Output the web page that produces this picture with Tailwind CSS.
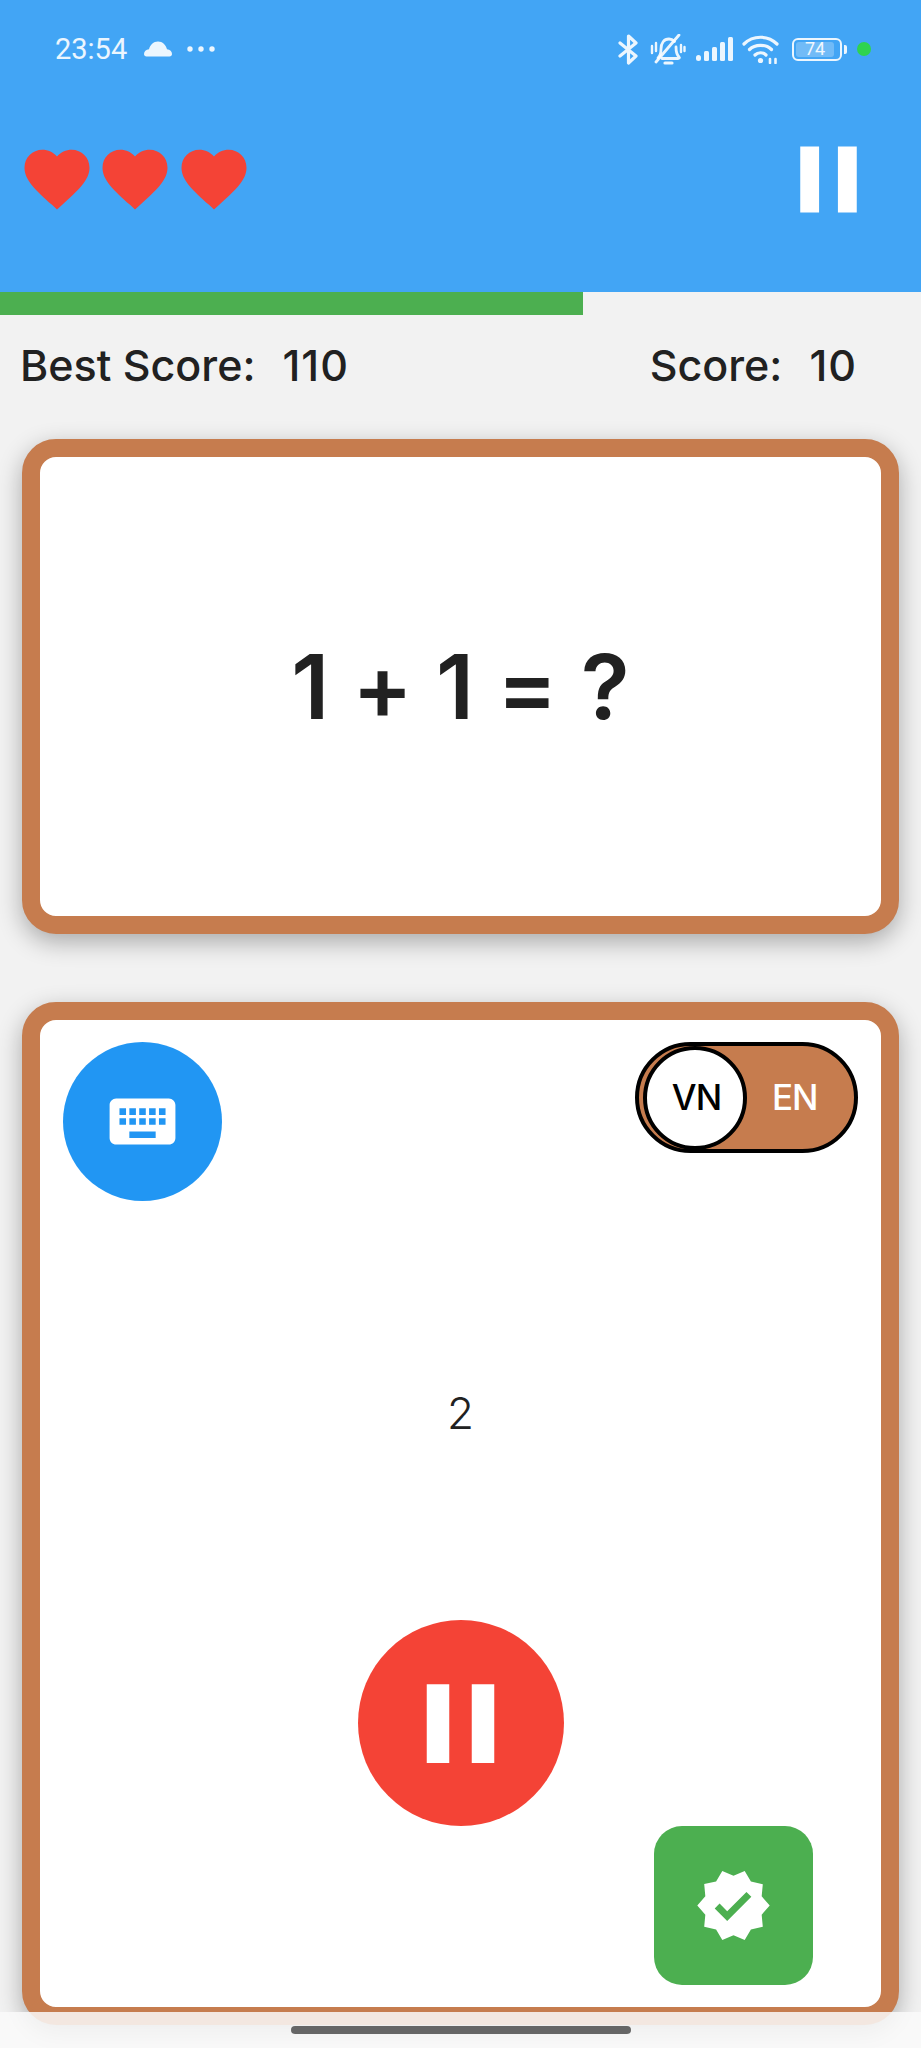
<!DOCTYPE html>
<html>
<head>
<meta charset="utf-8">
<script src="https://cdn.jsdelivr.net/npm/@tailwindcss/browser@4"></script>
</head>
<body class="m-0">
<div class="relative w-[921px] h-[2048px] overflow-hidden bg-[#f2f2f2] font-['Inter',sans-serif] text-[#212121]">
  <header class="h-[292px] bg-[#42a5f5] flex flex-col">
    <div class="h-[98px] flex items-center justify-between pl-[55px] pr-[50px] text-white/90">
      <div class="flex items-center">
        <span class="font-['Roboto',sans-serif] text-[29px] leading-none">23:54</span>
        <svg class="ml-[16px] w-[30px] h-[18px]" viewBox="0 0 30 18" fill="currentColor"><path d="M1 14c0-2.500 2-4.500 5-4.800C7 5 10.500 1.500 15 1.500s8 3.500 9 7.700c3 .3 5 2.300 5 4.800 0 1.500-1 2.500-2.500 2.500h-23C2 16.500 1 15.500 1 14z"/></svg>
        <svg class="ml-[14px] w-[28px] h-[6px]" viewBox="0 0 28 6" fill="currentColor"><circle cx="3" cy="3" r="2.700"/><circle cx="14" cy="3" r="2.700"/><circle cx="25" cy="3" r="2.700"/></svg>
      </div>
      <div class="flex items-center">
        <svg class="w-[21px] h-[31px]" viewBox="0 0 21 31" fill="none" stroke="currentColor" stroke-width="3.200" stroke-linejoin="round" stroke-linecap="round"><path d="M2 9l16 13-7.500 7V2L18 9 2 22"/></svg>
        <svg class="ml-[11px] w-[36px] h-[31px]" viewBox="0 0 36 31" fill="none" stroke="currentColor" stroke-width="2.800" stroke-linecap="round"><path d="M8 24c2-2 3-5 3-9 0-6 3-10 8-10 2 0 4 1 5.500 2.500M26 13c0 6 1 8 3 10 1 1 0 1.500-1 1.500H12"/><path d="M15 29h7" stroke-width="3.200"/><path d="M6 28L29 1"/><path d="M2 12v7M6 9v8M31 11v7M34.500 13v4" stroke-width="2.400"/></svg>
        <svg class="ml-[10px] w-[37px] h-[24px]" viewBox="0 0 37 24" fill="currentColor"><rect x="0" y="18" width="5" height="6" rx="2.500"/><rect x="8" y="14" width="5" height="10" rx="1.500"/><rect x="16" y="10" width="5" height="14" rx="1.500"/><rect x="24" y="5" width="5" height="19" rx="1.500"/><rect x="32" y="0" width="5" height="24" rx="1.500"/></svg>
        <svg class="ml-[9px] w-[37px] h-[29px]" viewBox="0 0 37 29" fill="none" stroke="currentColor" stroke-width="3.200" stroke-linecap="round"><path d="M2 9C11 0 26 0 35 9"/><path d="M7.500 14.500C13 9 24 9 29.500 14.500"/><path d="M13 20c3-3 8-3 11 0"/><circle cx="18.500" cy="25.500" r="2.600" fill="currentColor" stroke="none"/><path d="M28 24v4M33.500 24v4" stroke-width="2.600"/></svg>
        <div class="ml-[13px] w-[50px] h-[23px] rounded-[6px] border-2 border-white/90 p-[2px] flex">
          <div class="w-[38px] h-full rounded-[3px] bg-white/25 flex items-center justify-center">
            <span class="font-['Roboto',sans-serif] text-[18px] leading-none text-white/90">74</span>
          </div>
        </div>
        <div class="ml-[2px] w-[3px] h-[9px] rounded-r-[2px] bg-white/90"></div>
        <div class="ml-[10px] w-[14px] h-[14px] rounded-full bg-[#2fd34f]"></div>
      </div>
    </div>
    <div class="mt-[42px] h-[78px] flex items-center justify-between pl-[18px] pr-[36px]">
      <div class="flex">
        <svg class="w-[78px] h-[78px]" viewBox="0 0 24 24" fill="#f44336"><path d="M12 21.350l-1.450-1.320C5.400 15.360 2 12.280 2 8.500 2 5.420 4.420 3 7.500 3c1.740 0 3.410.81 4.500 2.090C13.090 3.810 14.760 3 16.500 3 19.580 3 22 5.420 22 8.500c0 3.780-3.400 6.860-8.550 11.540L12 21.350z"/></svg>
        <svg class="w-[78px] h-[78px]" viewBox="0 0 24 24" fill="#f44336"><path d="M12 21.350l-1.450-1.320C5.400 15.360 2 12.280 2 8.500 2 5.420 4.420 3 7.500 3c1.740 0 3.410.81 4.500 2.090C13.090 3.810 14.760 3 16.500 3 19.580 3 22 5.420 22 8.500c0 3.780-3.400 6.860-8.550 11.540L12 21.350z"/></svg>
        <svg class="ml-[1px] w-[78px] h-[78px]" viewBox="0 0 24 24" fill="#f44336"><path d="M12 21.350l-1.450-1.320C5.400 15.360 2 12.280 2 8.500 2 5.420 4.420 3 7.500 3c1.740 0 3.410.81 4.500 2.090C13.090 3.810 14.760 3 16.500 3 19.580 3 22 5.420 22 8.500c0 3.780-3.400 6.860-8.550 11.540L12 21.350z"/></svg>
      </div>
      <svg class="w-[113px] h-[113px]" viewBox="0 0 24 24" fill="#ffffff"><path d="M6 19h4V5H6v14zm8-14v14h4V5h-4z"/></svg>
    </div>
  </header>
  <div class="h-[23px]">
    <div class="h-full w-[583px] bg-[#4caf50]"></div>
  </div>
  <div class="h-[100px] flex items-center justify-between pl-[20px] pr-[64px] text-[43px] font-medium leading-none">
    <span class="flex gap-[27px]"><span>Best Score:</span><span class="tracking-[1px]">110</span></span>
    <span class="flex gap-[27px]"><span>Score:</span><span class="tracking-[1px]">10</span></span>
  </div>
  <section class="mt-[24px] mx-[22px] h-[495px] rounded-[34px] border-[18px] border-[#c67c4e] bg-white shadow-[0_8px_24px_rgba(0,0,0,0.3)] flex items-center justify-center">
    <span class="text-[90px] font-semibold tracking-[0.2px] leading-none whitespace-pre">1 + 1 = ?</span>
  </section>
  <section class="mt-[68px] mx-[22px] h-[1023px] rounded-[34px] border-[18px] border-[#c67c4e] bg-white shadow-[0_8px_24px_rgba(0,0,0,0.3)] flex flex-col">
    <div class="pt-[22px] px-[23px] flex items-start justify-between">
      <div class="w-[159px] h-[159px] rounded-full bg-[#2196f3] flex items-center justify-center">
        <svg class="w-[79px] h-[79px]" viewBox="0 0 24 24" fill="#ffffff"><path d="M20 5H4c-1.100 0-1.990.9-1.990 2L2 17c0 1.100.9 2 2 2h16c1.100 0 2-.9 2-2V7c0-1.100-.9-2-2-2zm-9 3h2v2h-2V8zm0 3h2v2h-2v-2zM8 8h2v2H8V8zm0 3h2v2H8v-2zm-1 2H5v-2h2v2zm0-3H5V8h2v2zm9 7H8v-2h8v2zm0-4h-2v-2h2v2zm0-3h-2V8h2v2zm3 3h-2v-2h2v2zm0-3h-2V8h2v2z"/></svg>
      </div>
      <div class="w-[223px] h-[111px] rounded-full border-[4px] border-black bg-[#c67c4e] flex items-center pl-[4px]">
        <div class="w-[104px] h-[104px] shrink-0 rounded-full border-[4px] border-black bg-white flex items-center justify-center pl-[3px] text-[35px] font-medium tracking-[-1px] text-black leading-none">VN</div>
        <span class="ml-[25px] text-[35px] font-medium tracking-[-1px] text-white leading-none">EN</span>
      </div>
    </div>
    <div class="mt-[190px] text-center text-[44px] font-light leading-none">2</div>
    <div class="mt-[185px] flex justify-center">
      <div class="w-[206px] h-[206px] rounded-full bg-[#f44336] flex items-center justify-center">
        <svg class="w-[135px] h-[135px]" viewBox="0 0 24 24" fill="#ffffff"><path d="M6 19h4V5H6v14zm8-14v14h4V5h-4z"/></svg>
      </div>
    </div>
    <div class="flex justify-end pr-[68px]">
      <div class="w-[159px] h-[159px] rounded-[28px] bg-[#4caf50] flex items-center justify-center">
        <svg class="w-[79px] h-[79px]" viewBox="0 0 24 24" fill="#ffffff"><path d="M23 12l-2.440-2.790.34-3.690-3.610-.82-1.890-3.200L12 2.960 8.600 1.500 6.710 4.690 3.100 5.500l.34 3.700L1 12l2.440 2.790-.34 3.700 3.610.82L8.600 22.500l3.400-1.470 3.400 1.460 1.890-3.190 3.610-.82-.34-3.690L23 12zm-12.910 4.720l-3.800-3.810 1.480-1.480 2.320 2.330 5.850-5.870 1.480 1.480-7.330 7.350z"/></svg>
      </div>
    </div>
  </section>
  <div class="absolute left-0 right-0 bottom-0 h-[36px] bg-[#fafafa]/85 flex justify-center">
    <div class="mt-[14px] w-[340px] h-[8px] rounded-full bg-[#666666]"></div>
  </div>
</div>
</body>
</html>
